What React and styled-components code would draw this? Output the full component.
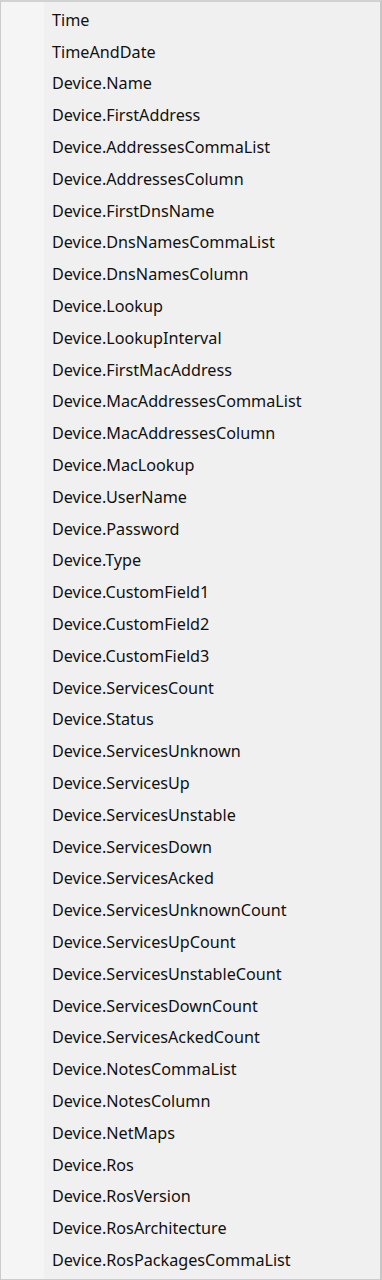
import React from "react";
import styled, { createGlobalStyle } from "styled-components";

const Global = createGlobalStyle`
  html, body { margin: 0; padding: 0; background: #ffffff; }
  #root { width: 382px; height: 1280px; }
`;

const items = [
  "Time", "TimeAndDate", "Device.Name", "Device.FirstAddress", "Device.AddressesCommaList",
  "Device.AddressesColumn", "Device.FirstDnsName", "Device.DnsNamesCommaList", "Device.DnsNamesColumn",
  "Device.Lookup", "Device.LookupInterval", "Device.FirstMacAddress", "Device.MacAddressesCommaList",
  "Device.MacAddressesColumn", "Device.MacLookup", "Device.UserName", "Device.Password", "Device.Type",
  "Device.CustomField1", "Device.CustomField2", "Device.CustomField3", "Device.ServicesCount",
  "Device.Status", "Device.ServicesUnknown", "Device.ServicesUp", "Device.ServicesUnstable",
  "Device.ServicesDown", "Device.ServicesAcked", "Device.ServicesUnknownCount", "Device.ServicesUpCount",
  "Device.ServicesUnstableCount", "Device.ServicesDownCount", "Device.ServicesAckedCount",
  "Device.NotesCommaList", "Device.NotesColumn", "Device.NetMaps", "Device.Ros", "Device.RosVersion",
  "Device.RosArchitecture", "Device.RosPackagesCommaList",
];

const Menu = styled.div`
  box-sizing: border-box;
  width: 382px;
  height: 1280px;
  border: 1px solid #cccccc;
  border-top: 2px solid #d2d2d2;
  border-right: 2px solid #c6c6c6;
  background: linear-gradient(to right, #f5f5f5 0, #f5f5f5 43px, #f0f0f0 43px);
  padding: 2px 0 0 0;
  display: flex;
  flex-direction: column;
  overflow: hidden;
`;

const Item = styled.div`
  height: 31.8px;
  flex: none;
  display: flex;
  align-items: center;
  padding-left: 51px;
  font-family: "Noto Sans", "Open Sans", sans-serif;
  font-size: 16.2px;
  color: #111111;
  white-space: nowrap;
`;

export default function App() {
  return (
    <>
      <Global />
      <Menu>
        {items.map((t) => (
          <Item key={t}>{t}</Item>
        ))}
      </Menu>
    </>
  );
}
